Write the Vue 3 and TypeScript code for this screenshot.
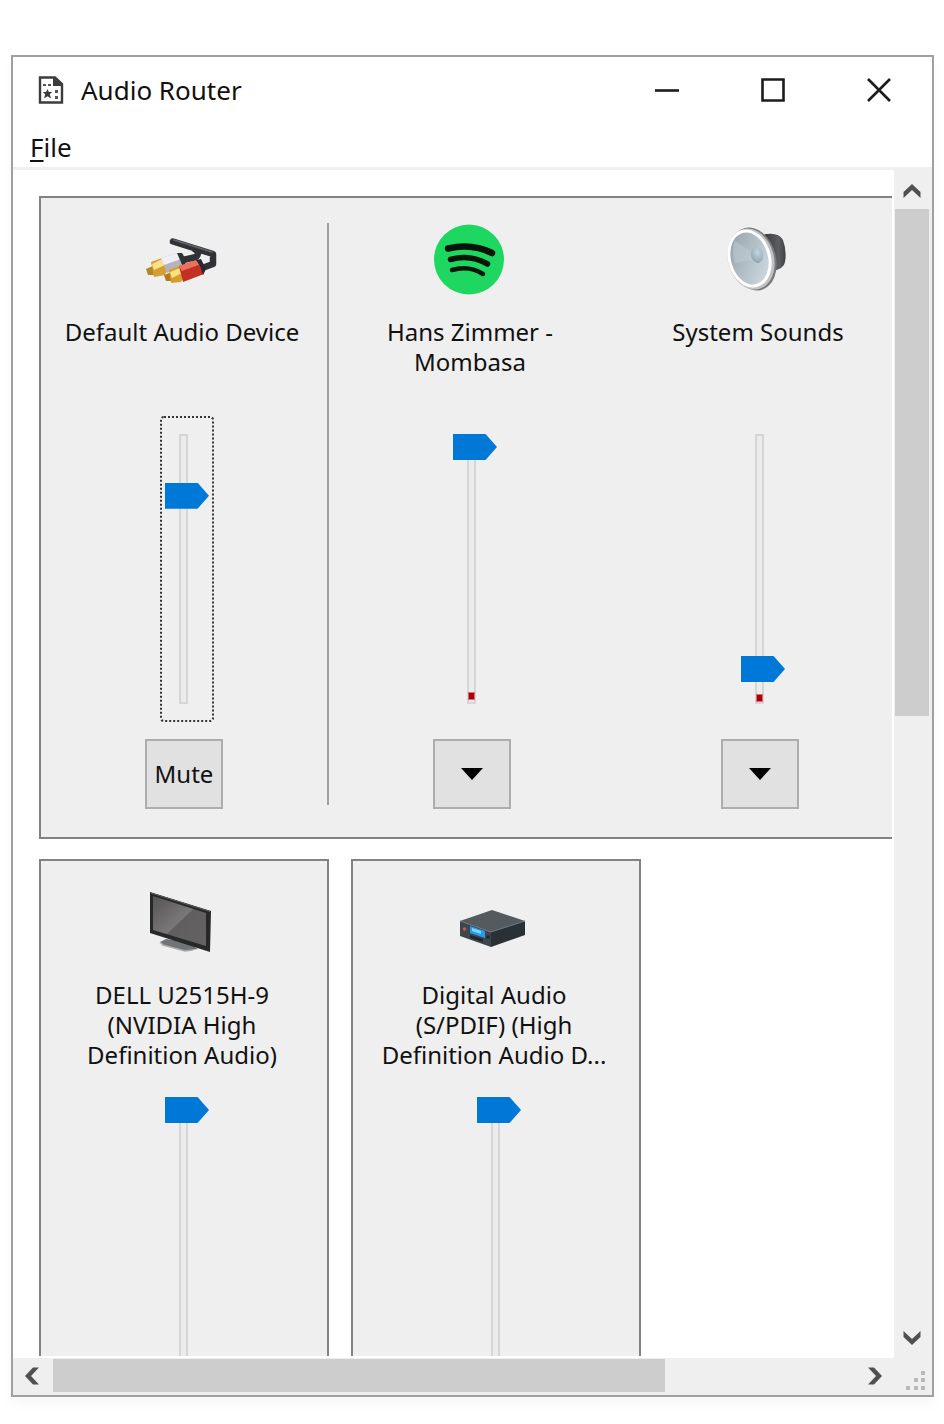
<script setup lang="ts">
import { ref } from 'vue'

type IconName = 'cable' | 'music' | 'speaker' | 'monitor' | 'receiver'

interface Channel {
  id: string
  label: string
  icon: IconName
  volume: number
  focused?: boolean
  meter?: number
  action?: 'mute' | 'menu'
}

const panels = ref<Channel[][]>([
  [
    { id: 'default', label: 'Default Audio Device', icon: 'cable', volume: 80, focused: true, action: 'mute' },
    { id: 'music', label: 'Hans Zimmer -\nMombasa', icon: 'music', volume: 100, meter: 4, action: 'menu' },
    { id: 'system', label: 'System Sounds', icon: 'speaker', volume: 9, meter: 2, action: 'menu' },
  ],
  [{ id: 'dell', label: 'DELL U2515H-9\n(NVIDIA High\nDefinition Audio)', icon: 'monitor', volume: 100 }],
  [{ id: 'spdif', label: 'Digital Audio\n(S/PDIF) (High\nDefinition Audio D...', icon: 'receiver', volume: 100 }],
])

const verticalThumb = 45.7
const horizontalThumb = 76.4
</script>

<template>
  <div class="desktop">
    <main class="window">
      <header class="titlebar">
        <svg class="app-icon" viewBox="0 0 26 28" aria-hidden="true">
          <path d="M2 1.500H17L24 8V26.500H2Z" fill="#fff" stroke="#3c3c3c" stroke-width="2.400" />
          <path d="M15 1L25 10H15Z" fill="#3c3c3c" />
          <path d="M5 8h3v2H5zM10 8h3v2h-3zM17 14h3v3h-3zM17 20h3v3h-3z" fill="#555" />
          <path d="M9.500 13l1.400 3h3.300l-2.400 2.300 1.300 4.200-3.600-2.300L6 22.500l1.200-4.200L4.800 16h3.300z" fill="#3c3c3c" />
        </svg>
        <h1>Audio Router</h1>
        <div class="window-buttons">
          <button type="button" aria-label="Minimize">
            <svg viewBox="0 0 24 24"><path d="M0 12.500H24" /></svg>
          </button>
          <button type="button" aria-label="Maximize">
            <svg viewBox="0 0 24 24"><path d="M1.500 1.500h21v21h-21z" /></svg>
          </button>
          <button type="button" aria-label="Close">
            <svg viewBox="0 0 24 24"><path d="M1 1L23 23M23 1L1 23" /></svg>
          </button>
        </div>
      </header>
      <nav class="menubar">
        <button type="button"><u>F</u>ile</button>
      </nav>

      <div class="body">
        <div class="viewport">
          <div class="panels">
            <section v-for="(panel, index) in panels" :key="index" class="panel" :class="{ wide: panel.length > 1 }">
              <div v-for="channel in panel" :key="channel.id" class="channel">
                <div class="head">
                  <svg class="device-icon" viewBox="0 0 72 72" aria-hidden="true">
                    <template v-if="channel.icon === 'cable'">
                      <g fill="none" stroke-linecap="round" stroke-linejoin="round">
                        <path d="M27 18.500L67 31V41L56 45M47 25Q55 29 50 34L37 37" stroke="#303236" stroke-width="6.500" />
                        <path d="M28 17L66 29" stroke="#62656a" stroke-width="1.800" />
                      </g>
                      <path d="M0 46L9 42V52L2 52Z" fill="#b58528" />
                      <path d="M5 39L16 35L22 46L19 52L8 54Z" fill="#d39f35" />
                      <path d="M6 41L16 36L19 42L8 47Z" fill="#ffe08a" />
                      <path d="M15 35L31 30Q37 33 38 42L21 50Z" fill="#b4b4ba" />
                      <path d="M15 35L31 30Q34 32 35 36L18 42Z" fill="#efeff5" />
                      <path d="M31 30L36 30L41 38L37 44Z" fill="#303135" />
                      <path d="M18 52L26 49L28 58L20 58Z" fill="#b17b19" />
                      <path d="M23 47L34 43L39 52L35 59L25 60Z" fill="#d89c2e" />
                      <path d="M24 49L34 45L36 50L26 55Z" fill="#ffdf80" />
                      <path d="M33 43L51 37Q58 42 58 51L37 59Z" fill="#c23023" />
                      <path d="M33 43L51 37L55 41L36 48Z" fill="#f0705c" />
                      <path d="M50 37L55 36L60 46L57 52L54 43Z" fill="#292a2e" />
                    </template>
                    <template v-else-if="channel.icon === 'music'">
                      <circle cx="35" cy="36.500" r="35" fill="#1ed760" />
                      <g fill="none" stroke="#071509" stroke-linecap="round">
                        <path d="M14 25.500Q38 20 58 30" stroke-width="6.500" />
                        <path d="M16.500 36.500Q36 31 53.500 41" stroke-width="5.500" />
                        <path d="M18 47Q35 42 49 51" stroke-width="4.500" />
                      </g>
                    </template>
                    <template v-else-if="channel.icon === 'speaker'">
                      <defs>
                        <linearGradient id="cone" x1="0" y1="0" x2="1" y2="1">
                          <stop offset="0" stop-color="#8f9ca5" />
                          <stop offset="0.500" stop-color="#b3c0c8" />
                          <stop offset="1" stop-color="#d6e2e8" />
                        </linearGradient>
                        <linearGradient id="housing" x1="0" y1="0" x2="1" y2="0">
                          <stop offset="0" stop-color="#333538" />
                          <stop offset="0.700" stop-color="#5c5e61" />
                          <stop offset="1" stop-color="#3e4043" />
                        </linearGradient>
                        <radialGradient id="dome" cx="0.600" cy="0.350" r="0.700">
                          <stop offset="0" stop-color="#c3d6e0" />
                          <stop offset="1" stop-color="#90a3af" />
                        </radialGradient>
                      </defs>
                      <path d="M40 12Q56 8 61 17Q65 28 63 39Q62 46 50 48Z" fill="url(#housing)" />
                      <ellipse cx="31" cy="36" rx="23" ry="32" transform="rotate(-15 31 36)" fill="#77797c" />
                      <ellipse cx="29" cy="36" rx="23" ry="31" transform="rotate(-15 29 36)" fill="#bfc1c3" />
                      <ellipse cx="27.500" cy="35.500" rx="20" ry="28" transform="rotate(-15 27.500 35.500)" fill="url(#cone)" stroke="#fff" stroke-width="3" />
                      <path d="M32 30L13 18Q9 26 13 40L31 37Z" fill="#c2ced5" opacity="0.500" />
                      <ellipse cx="35" cy="32" rx="6" ry="8" transform="rotate(-15 35 32)" fill="url(#dome)" />
                    </template>
                    <template v-else-if="channel.icon === 'monitor'">
                      <defs>
                        <linearGradient id="screen" x1="0" y1="0" x2="1" y2="1">
                          <stop offset="0" stop-color="#555354" />
                          <stop offset="0.500" stop-color="#7a7879" />
                          <stop offset="0.520" stop-color="#605e5f" />
                          <stop offset="1" stop-color="#656364" />
                        </linearGradient>
                      </defs>
                      <path d="M20 53L14 56L17 59L39 65L52 63L41 56Z" fill="#717477" />
                      <path d="M14 56L17 59L39 65L47 64" fill="none" stroke="#a9abad" stroke-width="1.500" />
                      <path d="M4 6L65 25L64 66L4 47Z" fill="#272829" />
                      <path d="M7 10L60 27V60L7 44Z" fill="url(#screen)" />
                      <path d="M5 7L64 25.500" stroke="#5b5d5e" stroke-width="1" />
                    </template>
                    <template v-else>
                      <path d="M2 35L34 24L67 35L33 46Z" fill="#535b61" />
                      <path d="M2 35L33 46V61L2 50Z" fill="#3e454b" />
                      <path d="M33 46L67 35V49L33 61Z" fill="#293036" />
                      <path d="M2 35L33 46L67 35" fill="none" stroke="#6b747a" stroke-width="1" />
                      <path d="M12 40L27 45V52L12 47Z" fill="#239cf0" />
                      <path d="M14 42L23 45V48L14 45Z" fill="#83d4ff" />
                      <path d="M12 49L25 53V56L12 52Z" fill="#1f262c" />
                      <circle cx="6.500" cy="43" r="1.800" fill="#c65650" />
                      <circle cx="30" cy="51" r="1.800" fill="#20262a" />
                    </template>
                  </svg>
                  <label :for="`volume-${channel.id}`">{{ channel.label }}</label>
                </div>
                <div class="slider" :class="{ focused: channel.focused }">
                  <span v-if="channel.meter !== undefined" class="meter"><i :style="{ bottom: channel.meter + 'px' }"></i></span>
                  <input :id="`volume-${channel.id}`" v-model.number="channel.volume" type="range" min="0" max="100" />
                </div>
                <button v-if="channel.action === 'mute'" type="button" class="action">Mute</button>
                <button v-else-if="channel.action === 'menu'" type="button" class="action" :aria-label="`Options for ${channel.label}`">
                  <svg viewBox="0 0 22 12"><path d="M0 0H22L11 12Z" /></svg>
                </button>
              </div>
            </section>
          </div>
        </div>

        <div class="scrollbar vertical">
          <button type="button" aria-label="Scroll up">
            <svg viewBox="0 0 18 18"><path d="M9 3L17.500 11V17L9 9L0.500 17V11Z" /></svg>
          </button>
          <div class="track"><div class="thumb" :style="{ height: verticalThumb + '%' }"></div></div>
          <button type="button" aria-label="Scroll down">
            <svg viewBox="0 0 18 18"><path d="M9 15L17.500 7V1L9 9L0.500 1V7Z" /></svg>
          </button>
        </div>
        <div class="scrollbar horizontal">
          <button type="button" aria-label="Scroll left">
            <svg viewBox="0 0 18 18"><path d="M1 9L9 0.500H15L7 9L15 17.500H9Z" /></svg>
          </button>
          <div class="track"><div class="thumb" :style="{ width: horizontalThumb + '%' }"></div></div>
          <button type="button" aria-label="Scroll right">
            <svg viewBox="0 0 18 18"><path d="M17 9L9 0.500H3L11 9L3 17.500H9Z" /></svg>
          </button>
        </div>
        <div class="grip">
          <svg viewBox="0 0 19 19" aria-hidden="true">
            <path d="M15 0h4v4h-4zM8 7h4v4H8zM15 7h4v4h-4zM0 15h4v4H0zM8 15h4v4H8zM15 15h4v4h-4z" />
          </svg>
        </div>
      </div>
    </main>
  </div>
</template>

<style>
body {
  margin: 0;
  background: #fff;
}
</style>

<style scoped>
*,
*::before,
*::after {
  box-sizing: border-box;
}

.desktop {
  height: 100vh;
  padding: 55px 10px 27px 11px;
  font-family: "Noto Sans", "Open Sans", sans-serif;
  color: #111;
}

.window {
  display: flex;
  flex-direction: column;
  height: 100%;
  border: 2px solid #a0a0a0;
  background: #fff;
  box-shadow: 0 8px 12px rgba(0, 0, 0, 0.03);
}

button {
  display: flex;
  align-items: center;
  justify-content: center;
  margin: 0;
  padding: 0;
  border: 0;
  background: none;
  color: inherit;
  font: inherit;
}

svg {
  display: block;
}

.titlebar {
  display: flex;
  flex: none;
  align-items: center;
  height: 66px;
  padding-left: 25px;
}

.app-icon {
  width: 26px;
  height: 28px;
}

h1 {
  margin: 0 auto 0 17px;
  font-size: 26px;
  font-weight: 400;
  line-height: 36px;
}

.window-buttons {
  display: flex;
  align-self: stretch;
}

.window-buttons button {
  width: 106px;
}

.window-buttons svg {
  width: 24px;
  height: 24px;
  fill: none;
  stroke: #1c1c1c;
  stroke-width: 2.6;
}

.menubar {
  display: flex;
  flex: none;
  height: 47px;
  padding: 4px 17px 0;
  border-bottom: 3px solid #efefef;
  font-size: 26px;
  line-height: 36px;
}

.menubar u {
  text-decoration-thickness: 2px;
  text-underline-offset: 3px;
}

.body {
  display: grid;
  flex: 1;
  grid-template-columns: minmax(0, 1fr) 38px;
  grid-template-rows: minmax(0, 1fr) 37px;
  min-height: 0;
}

.viewport {
  margin: 0 2px 2px 0;
  overflow: hidden;
}

.panels {
  display: grid;
  grid-template-columns: 290px 290px 290px;
  gap: 20px 22px;
  padding: 26px;
}

.panel {
  display: flex;
  gap: 2px;
  padding: 25px 0 28px;
  border: 2px solid #828282;
  background: #efefef;
}

.panel.wide {
  grid-column: 1 / -1;
}

.channel {
  position: relative;
  display: flex;
  flex: none;
  flex-direction: column;
  align-items: center;
  width: 286px;
}

.wide .channel:first-child::after {
  content: "";
  position: absolute;
  top: 0;
  right: -2px;
  bottom: 4px;
  width: 2px;
  background: #a0a0a0;
}

.head {
  display: flex;
  flex-direction: column;
  align-items: center;
  padding-right: 4px;
}

.device-icon {
  width: 72px;
  height: 72px;
}

label {
  height: 90px;
  margin-top: 22px;
  font-size: 24px;
  line-height: 30px;
  text-align: center;
  white-space: pre;
}

.slider {
  position: relative;
  height: 306px;
  margin: 9px 0 0 6px;
  padding: 16px 3px;
  border: 2px solid transparent;
  border-radius: 4px;
}

.slider.focused {
  border: 2px dotted #333;
}

.slider::before,
.meter {
  position: absolute;
  top: 16px;
  bottom: 16px;
  left: 17px;
  width: 9px;
}

.slider::before {
  content: "";
  border: 2px solid #d6d6d6;
  background: #ececec;
}

.meter i {
  position: absolute;
  left: 1px;
  width: 7px;
  height: 8px;
  border: 1px solid #e06a70;
  background: #a8000c;
}

input[type="range"] {
  position: relative;
  display: block;
  width: 44px;
  height: 270px;
  margin: 0;
  appearance: none;
  background: transparent;
  direction: rtl;
  outline: none;
  writing-mode: vertical-lr;
}

input[type="range"]::-webkit-slider-thumb {
  width: 44px;
  height: 26px;
  border: 0;
  border-radius: 0;
  appearance: none;
  background: #0078d7;
  clip-path: polygon(0 0, 74% 0, 100% 50%, 74% 100%, 0 100%);
}

.action {
  width: 78px;
  height: 70px;
  margin-top: 17px;
  border: 2px solid #adadad;
  background: #e1e1e1;
  font-size: 24px;
  line-height: 30px;
}

.action svg {
  width: 22px;
  height: 12px;
  fill: #000;
}

.scrollbar {
  display: flex;
  background: #efefef;
}

.vertical {
  flex-direction: column;
  padding: 0 3px 0 1px;
}

.horizontal {
  padding: 1px 0 3px;
}

.scrollbar button {
  flex: none;
}

.vertical button {
  height: 39px;
}

.horizontal button {
  width: 40px;
}

.scrollbar svg {
  width: 18px;
  height: 18px;
  fill: #505050;
}

.track {
  flex: 1;
}

.thumb {
  width: 100%;
  height: 100%;
  background: #cdcdcd;
}

.grip {
  display: flex;
  align-items: flex-end;
  justify-content: flex-end;
  padding: 0 7px 5px 0;
  background: #efefef;
}

.grip svg {
  width: 19px;
  height: 19px;
  fill: #b8b8b8;
}
</style>
